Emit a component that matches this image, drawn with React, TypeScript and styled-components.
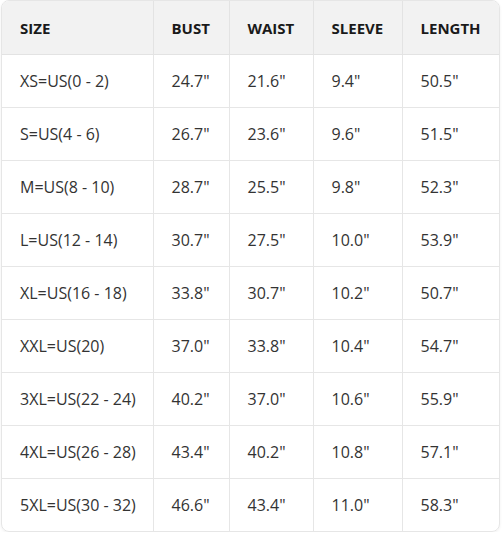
import styled, { createGlobalStyle } from "styled-components";

const GlobalStyle = createGlobalStyle`
  html, body {
    margin: 0;
    padding: 0;
    background: #ffffff;
  }
  body {
    font-family: "Open Sans", "Noto Sans", "Liberation Sans", sans-serif;
  }
`;

const Wrapper = styled.div`
  width: 497px;
  margin: 0 0 0 1px;
  border: 1px solid #e6e6e6;
  border-radius: 8px;
  overflow: hidden;
  box-shadow: 0 1px 3px rgba(0, 0, 0, 0.06);
`;

const Table = styled.table`
  width: 100%;
  border-collapse: collapse;
  table-layout: fixed;
`;

const Col = styled.col<{ $w: number }>`
  width: ${({ $w }) => $w}px;
`;

const HeadCell = styled.th`
  height: 53px;
  padding: 0 0 0 18px;
  background: #f2f2f2;
  color: #1a1a1a;
  font-size: 15px;
  font-weight: 700;
  text-align: left;
  white-space: nowrap;
  border-bottom: 1px solid #e3e3e3;
  border-left: 1px solid #e3e3e3;
  &:first-child {
    border-left: none;
  }
`;

const Row = styled.tr`
  &:last-child td {
    border-bottom: none;
  }
`;

const Cell = styled.td`
  height: 52px;
  padding: 0 0 0 18px;
  color: #333333;
  font-size: 16px;
  white-space: nowrap;
  border-bottom: 1px solid #e6e6e6;
  border-left: 1px solid #e6e6e6;
  &:first-child {
    border-left: none;
  }
`;

const columns = [
  { label: "SIZE", w: 151 },
  { label: "BUST", w: 76 },
  { label: "WAIST", w: 84 },
  { label: "SLEEVE", w: 89 },
  { label: "LENGTH", w: 97 },
];

const rows = [
  ["XS=US(0 - 2)", '24.7"', '21.6"', '9.4"', '50.5"'],
  ["S=US(4 - 6)", '26.7"', '23.6"', '9.6"', '51.5"'],
  ["M=US(8 - 10)", '28.7"', '25.5"', '9.8"', '52.3"'],
  ["L=US(12 - 14)", '30.7"', '27.5"', '10.0"', '53.9"'],
  ["XL=US(16 - 18)", '33.8"', '30.7"', '10.2"', '50.7"'],
  ["XXL=US(20)", '37.0"', '33.8"', '10.4"', '54.7"'],
  ["3XL=US(22 - 24)", '40.2"', '37.0"', '10.6"', '55.9"'],
  ["4XL=US(26 - 28)", '43.4"', '40.2"', '10.8"', '57.1"'],
  ["5XL=US(30 - 32)", '46.6"', '43.4"', '11.0"', '58.3"'],
];

export default function App() {
  return (
    <>
      <GlobalStyle />
      <Wrapper>
        <Table>
          <colgroup>
            {columns.map((c) => (
              <Col key={c.label} $w={c.w} />
            ))}
          </colgroup>
          <thead>
            <tr>
              {columns.map((c) => (
                <HeadCell key={c.label}>{c.label}</HeadCell>
              ))}
            </tr>
          </thead>
          <tbody>
            {rows.map((r) => (
              <Row key={r[0]}>
                {r.map((v, i) => (
                  <Cell key={i}>{v}</Cell>
                ))}
              </Row>
            ))}
          </tbody>
        </Table>
      </Wrapper>
    </>
  );
}
